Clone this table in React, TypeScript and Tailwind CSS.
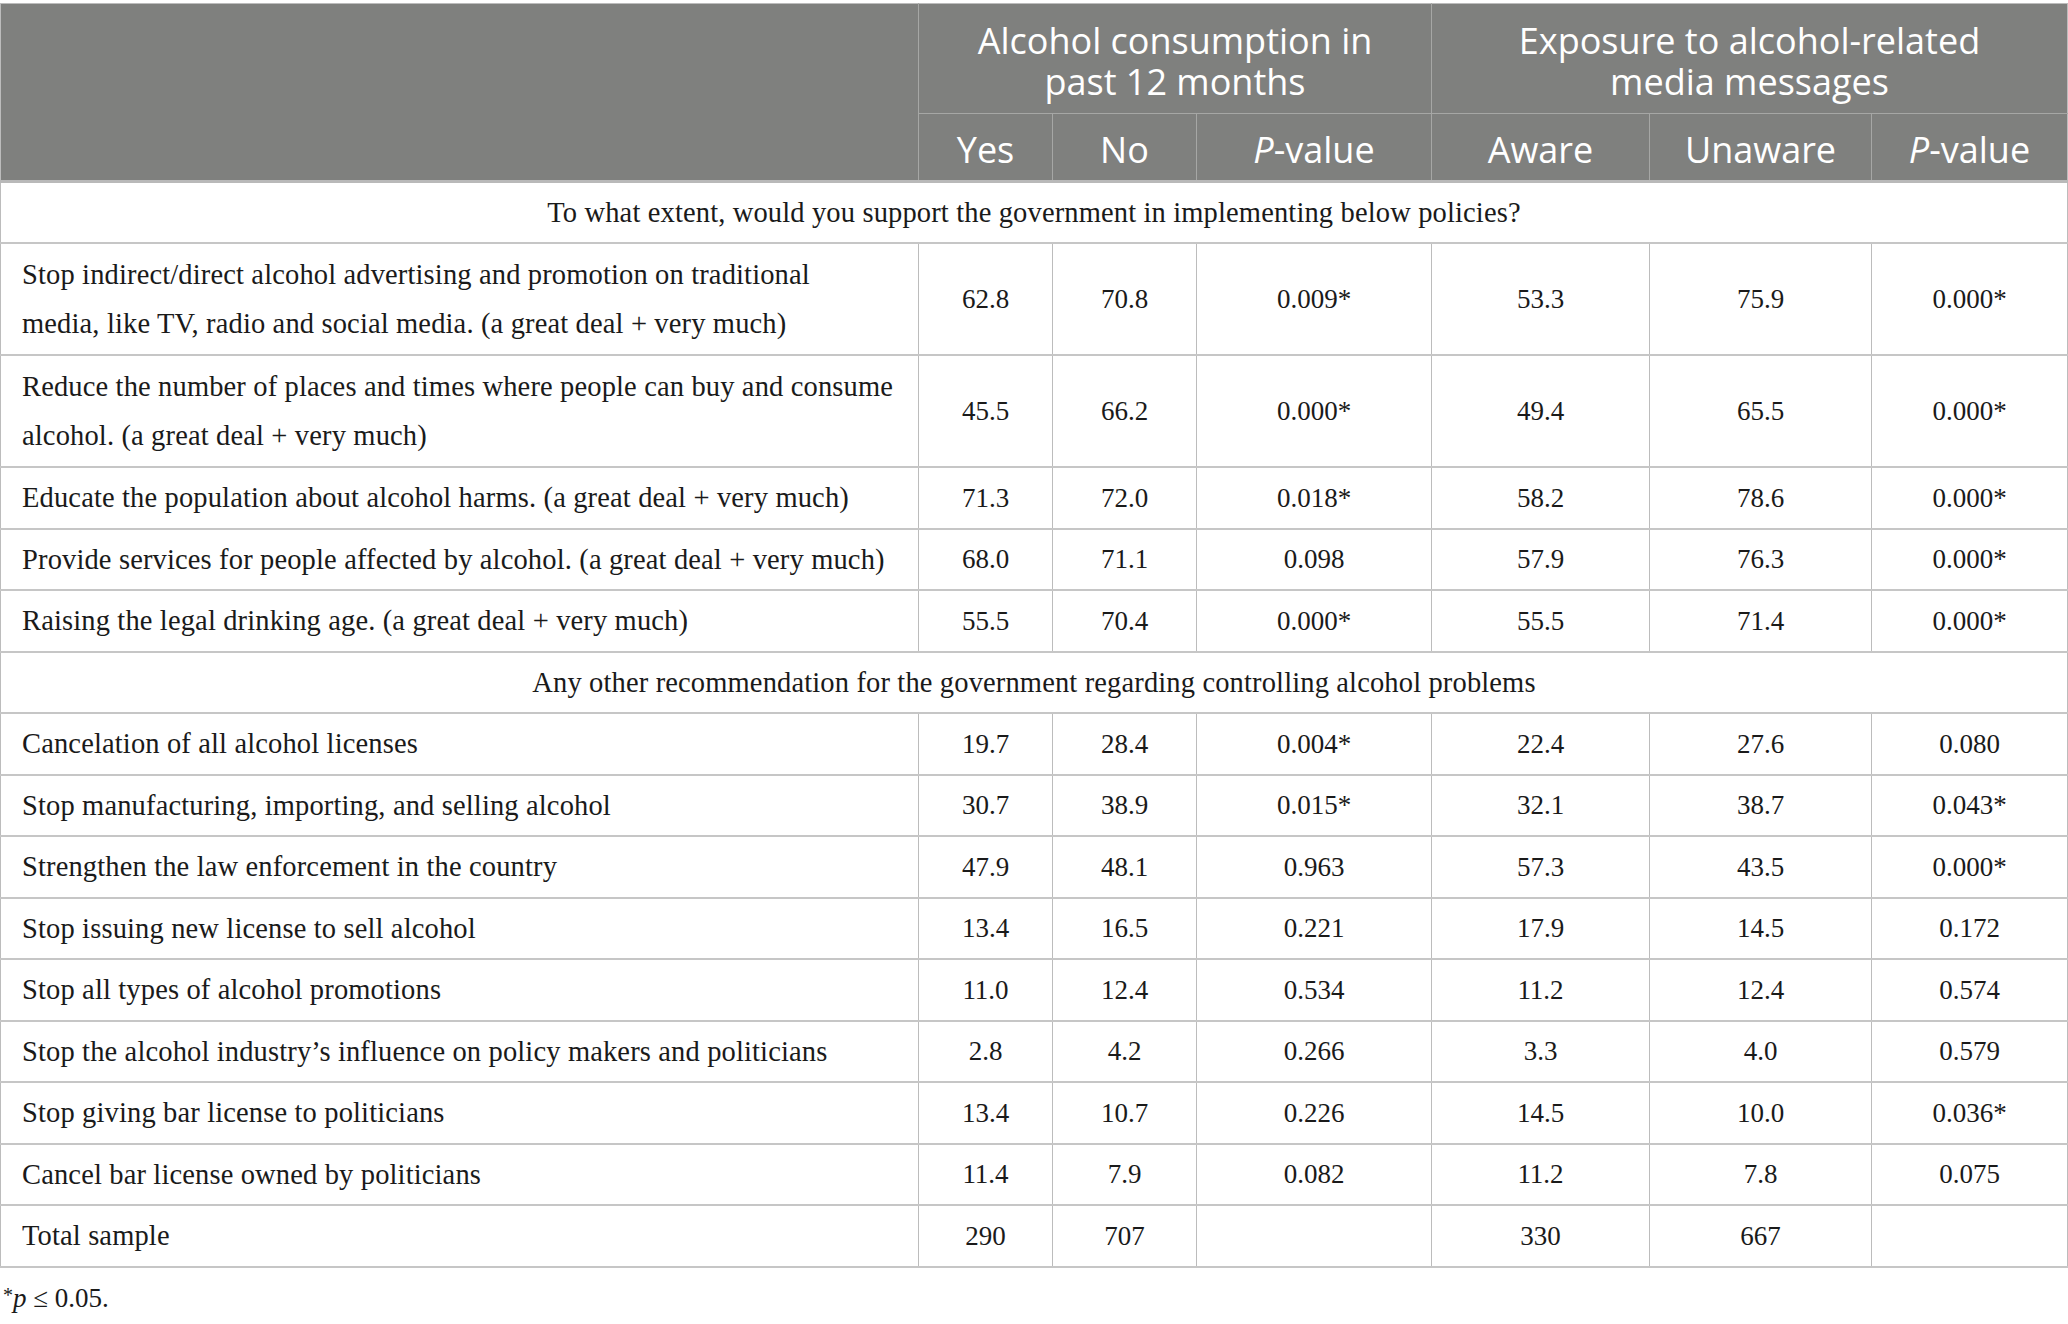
import React from "react";

type Row = {
    label: React.ReactNode;
    yes: string;
    no: string;
    p1: string;
    aware: string;
    unaware: string;
    p2: string;
    tall?: boolean;
};

const policies: Row[] = [
    {
        label: (
            <>
                Stop indirect/direct alcohol advertising and promotion on traditional
                <br />
                media, like TV, radio and social media. (a great deal + very much)
            </>
        ),
        yes: "62.8", no: "70.8", p1: "0.009*", aware: "53.3", unaware: "75.9", p2: "0.000*", tall: true,
    },
    {
        label: (
            <>
                Reduce the number of places and times where people can buy and consume
                <br />
                alcohol. (a great deal + very much)
            </>
        ),
        yes: "45.5", no: "66.2", p1: "0.000*", aware: "49.4", unaware: "65.5", p2: "0.000*", tall: true,
    },
    { label: "Educate the population about alcohol harms. (a great deal + very much)", yes: "71.3", no: "72.0", p1: "0.018*", aware: "58.2", unaware: "78.6", p2: "0.000*" },
    { label: "Provide services for people affected by alcohol. (a great deal + very much)", yes: "68.0", no: "71.1", p1: "0.098", aware: "57.9", unaware: "76.3", p2: "0.000*" },
    { label: "Raising the legal drinking age. (a great deal + very much)", yes: "55.5", no: "70.4", p1: "0.000*", aware: "55.5", unaware: "71.4", p2: "0.000*" },
];

const recommendations: Row[] = [
    { label: "Cancelation of all alcohol licenses", yes: "19.7", no: "28.4", p1: "0.004*", aware: "22.4", unaware: "27.6", p2: "0.080" },
    { label: "Stop manufacturing, importing, and selling alcohol", yes: "30.7", no: "38.9", p1: "0.015*", aware: "32.1", unaware: "38.7", p2: "0.043*" },
    { label: "Strengthen the law enforcement in the country", yes: "47.9", no: "48.1", p1: "0.963", aware: "57.3", unaware: "43.5", p2: "0.000*" },
    { label: "Stop issuing new license to sell alcohol", yes: "13.4", no: "16.5", p1: "0.221", aware: "17.9", unaware: "14.5", p2: "0.172" },
    { label: "Stop all types of alcohol promotions", yes: "11.0", no: "12.4", p1: "0.534", aware: "11.2", unaware: "12.4", p2: "0.574" },
    { label: "Stop the alcohol industry\u2019s influence on policy makers and politicians", yes: "2.8", no: "4.2", p1: "0.266", aware: "3.3", unaware: "4.0", p2: "0.579" },
    { label: "Stop giving bar license to politicians", yes: "13.4", no: "10.7", p1: "0.226", aware: "14.5", unaware: "10.0", p2: "0.036*" },
    { label: "Cancel bar license owned by politicians", yes: "11.4", no: "7.9", p1: "0.082", aware: "11.2", unaware: "7.8", p2: "0.075" },
    { label: "Total sample", yes: "290", no: "707", p1: "", aware: "330", unaware: "667", p2: "" },
];

const numCell = "border-l border-b-2 border-l-[#bcbcbc] border-b-[#c6c6c6] text-center align-middle font-['Liberation_Serif',serif] text-[27px]";

function DataRow({ row }: { row: Row }) {
    return (
        <tr className={row.tall ? "h-[112px]" : "h-[61.5px]"}>
            <td className="border-b-2 border-b-[#c6c6c6] px-[21px] py-[4px] align-middle whitespace-nowrap leading-[49px] tracking-[0.005em] text-[28.5px]">
                {row.label}
            </td>
            <td className={numCell}>{row.yes}</td>
            <td className={numCell}>{row.no}</td>
            <td className={numCell}>{row.p1}</td>
            <td className={numCell}>{row.aware}</td>
            <td className={numCell}>{row.unaware}</td>
            <td className={numCell}>{row.p2}</td>
        </tr>
    );
}

function SectionRow({ text }: { text: string }) {
    return (
        <tr className="h-[61.5px]">
            <td colSpan={7} className="border-b-2 border-b-[#c6c6c6] py-[4px] text-center align-middle leading-[49px] text-[28.5px] tracking-[0.005em]">
                {text}
            </td>
        </tr>
    );
}

export default function App() {
    const head = "border-l border-l-[#a6a7a5] text-white font-['Open_Sans',sans-serif] text-[36px] font-normal";
    const sub = head + " border-b-[3px] border-b-[#b9b9b9] pt-[5px]";

    return (
        <div className="w-[2068px] h-[1324px] overflow-hidden bg-white pt-[3px] text-[#1a1a1a] font-['Liberation_Serif',serif]">
            <table className="w-[2067px] table-fixed border-collapse border border-[#bcbcbc]">
                <colgroup>
                    <col className="w-[918px]" />
                    <col className="w-[134px]" />
                    <col className="w-[144px]" />
                    <col className="w-[235px]" />
                    <col className="w-[218px]" />
                    <col className="w-[222px]" />
                    <col className="w-[196px]" />
                </colgroup>
                <thead className="bg-[#7f807e]">
                    <tr className="h-[110px]">
                        <th rowSpan={2} className="border-b-[3px] border-b-[#b9b9b9]"></th>
                        <th colSpan={3} className={head + " border-b border-b-[#a6a7a5] leading-[41px] pt-[4px]"}>
                            Alcohol consumption in
                            <br />
                            past 12 months
                        </th>
                        <th colSpan={3} className={head + " border-b border-b-[#a6a7a5] leading-[41px] pt-[4px]"}>
                            Exposure to alcohol-related
                            <br />
                            media messages
                        </th>
                    </tr>
                    <tr className="h-[68px]">
                        <th className={sub}>Yes</th>
                        <th className={sub}>No</th>
                        <th className={sub}>
                            <i>P</i>-value
                        </th>
                        <th className={sub}>Aware</th>
                        <th className={sub}>Unaware</th>
                        <th className={sub}>
                            <i>P</i>-value
                        </th>
                    </tr>
                </thead>
                <tbody>
                    <SectionRow text="To what extent, would you support the government in implementing below policies?" />
                    {policies.map((r, i) => (
                        <DataRow key={"p" + i} row={r} />
                    ))}
                    <SectionRow text="Any other recommendation for the government regarding controlling alcohol problems" />
                    {recommendations.map((r, i) => (
                        <DataRow key={"r" + i} row={r} />
                    ))}
                </tbody>
            </table>
            <p className="mt-[14px] pl-[3px] text-[27px] leading-[32px]">
                <span className="relative -top-[5px] text-[20px]">*</span>
                <i>p</i> ≤ 0.05.
            </p>
        </div>
    );
}
